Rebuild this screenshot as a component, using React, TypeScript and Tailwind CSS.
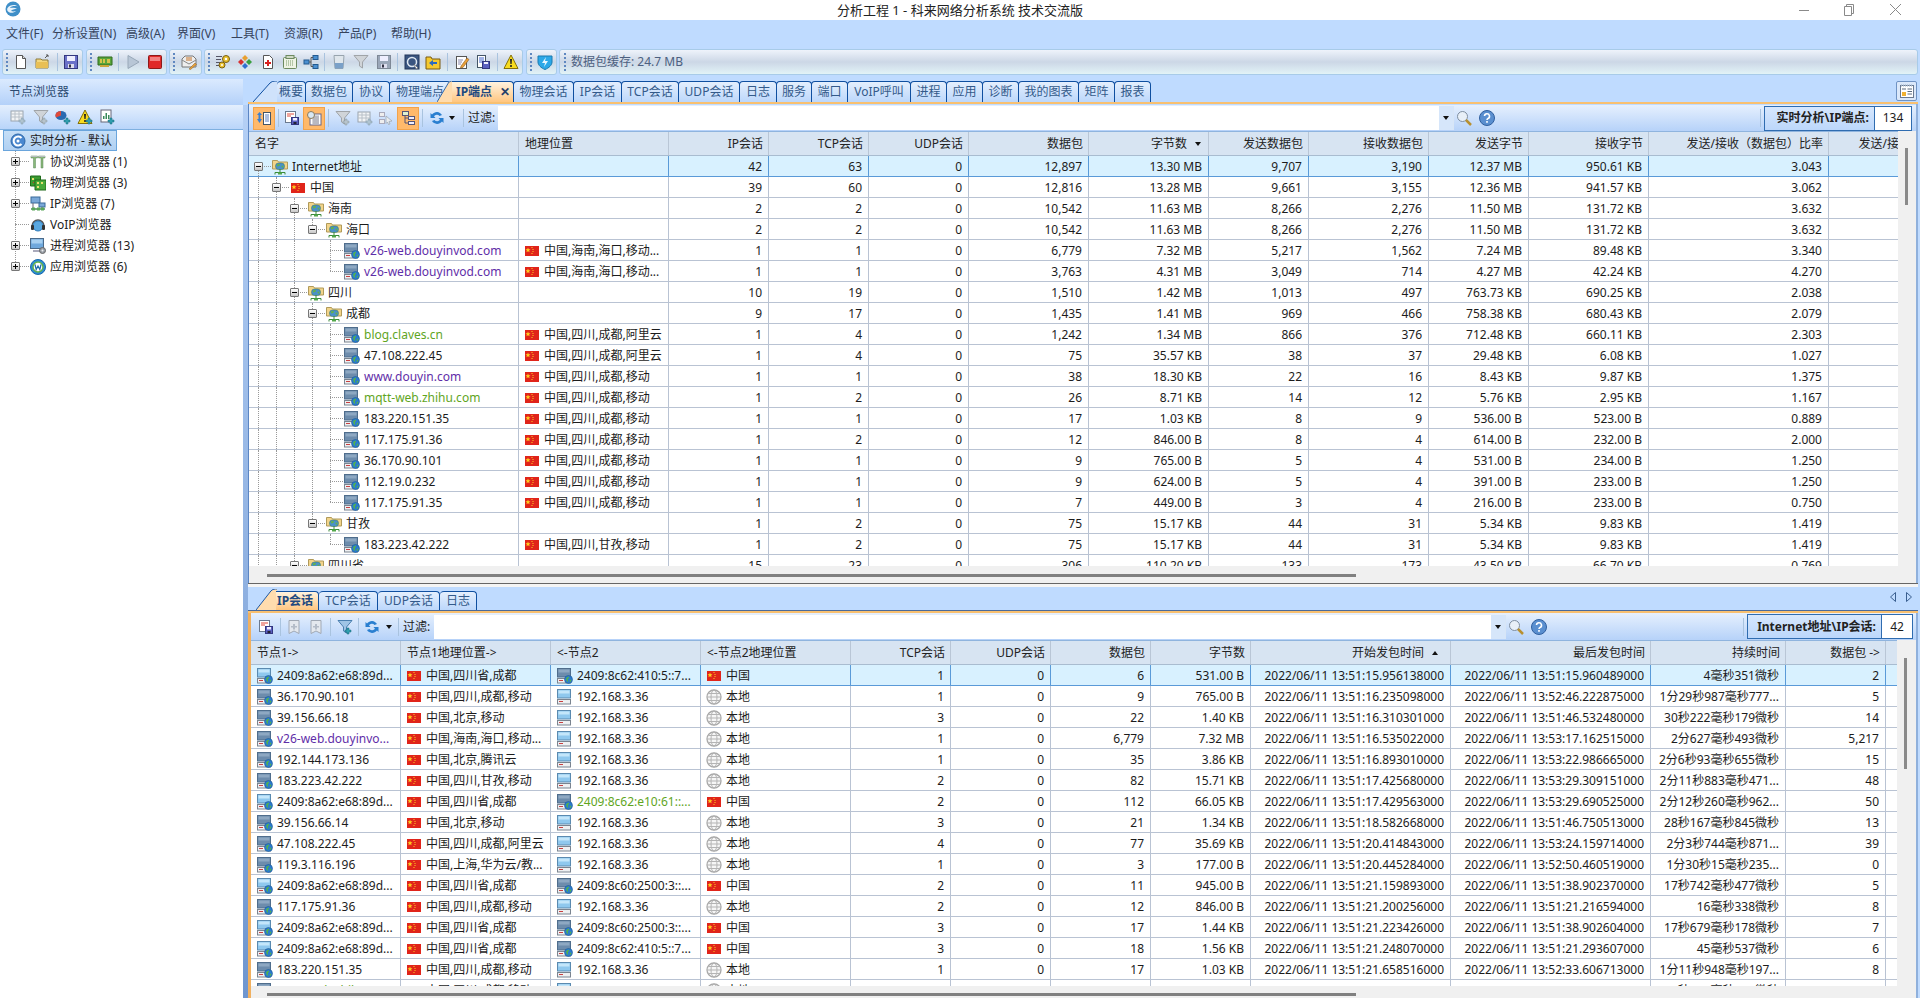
import type { ReactNode } from 'react';

const C = 'w-4 h-4 shrink-0';

function Doc() {
  return <svg viewBox="0 0 16 16" className={C}><path d="M3.500 1.500h6l3 3v10h-9z" fill="#fff" stroke="#555" /><path d="M9.500 1.500v3h3" fill="#ddd" stroke="#555" /></svg>;
}
function OpenFolder() {
  return <svg viewBox="0 0 16 16" className={C}><path d="M1 5h5l1 1h6v8H1z" fill="#f4d77c" stroke="#8c7a3c" /><path d="M1 8h12v6H1z" fill="#e8bf55" /><path d="M10 4l3-3M11 1h2v2" fill="none" stroke="#555" /></svg>;
}
function Save({ gray = false }: { gray?: boolean }) {
  const a = gray ? '#9aa6b8' : '#6a70c8';
  return <svg viewBox="0 0 16 16" className={C}><rect x="1.500" y="1.500" width="13" height="13" fill={a} stroke={gray ? '#7e8896' : '#33367f'} /><rect x="4" y="2" width="8" height="5" fill="#eef" /><rect x="5" y="10" width="6" height="4" fill="#dde" /><rect x="6" y="10.500" width="2" height="3" fill="#334" /></svg>;
}
function SaveDoc() {
  return <svg viewBox="0 0 16 16" className={C}><rect x="1.500" y="1.500" width="10" height="11" fill="#fff" stroke="#6b7a90" /><path d="M3 4h7M3 6h4" stroke="#e04a3a" /><rect x="7.500" y="7.500" width="7" height="7" fill="#5a5fc0" stroke="#33367f" /><rect x="9" y="8" width="4" height="2.500" fill="#eef" /><rect x="9.500" y="12" width="3" height="2" fill="#223" /></svg>;
}
function Nic() {
  return <svg viewBox="0 0 16 16" className={C}><path d="M1 3h14v8H1z" fill="#5aa53a" stroke="#2f6a1e" /><path d="M3 5h2v4H3zM6 5h2v4H6zM10 5h3v4h-3z" fill="#d5c34a" /><path d="M3 11h9v2H3z" fill="#c9a63a" /></svg>;
}
function Play() {
  return <svg viewBox="0 0 16 16" className={C}><path d="M3 1.500l11 6.500-11 6.500z" fill="#b8c6d6" stroke="#98a8b8" /></svg>;
}
function Stop() {
  return <svg viewBox="0 0 16 16" className={C}><rect x="1.500" y="1.500" width="13" height="13" rx="1" fill="#e02828" stroke="#8c1a1a" /><rect x="3" y="3" width="10" height="4" fill="#f28080" /></svg>;
}
function Mail() {
  return <svg viewBox="0 0 16 16" className={C}><path d="M1 5l3-3h8l3 3v8H1z" fill="#eee" stroke="#777" /><rect x="5" y="3" width="6" height="4" fill="#d9b08c" /><path d="M1 6l7 4 7-4" fill="none" stroke="#888" /><path d="M8 15l6-6 1.500 1.500-6 5z" fill="#e8a33a" stroke="#8a5a20" strokeWidth=".5" /></svg>;
}
function Gears() {
  return <svg viewBox="0 0 16 16" className={C}><path d="M1 2h6v1H1zM1 5h5v1H1zM1 8h4v1H1zM1 11h5v1H1z" fill="#556" /><circle cx="11" cy="5" r="3.500" fill="#e8c030" stroke="#7a6010" /><circle cx="7" cy="11" r="3" fill="#e8c030" stroke="#7a6010" /><circle cx="11" cy="5" r="1.200" fill="#fff" /><circle cx="7" cy="11" r="1" fill="#fff" /></svg>;
}
function Diamonds() {
  return <svg viewBox="0 0 16 16" className={C}><path d="M8 1l3 3-3 3-3-3z" fill="#e8a030" /><path d="M4 5l3 3-3 3-3-3z" fill="#d83030" /><path d="M12 5l3 3-3 3-3-3z" fill="#3aa040" /><path d="M8 9l3 3-3 3-3-3z" fill="#3070d0" /></svg>;
}
function DocPlus() {
  return <svg viewBox="0 0 16 16" className={C}><path d="M3.500 1.500h6l3 3v10h-9z" fill="#fff" stroke="#555" /><path d="M7 6h2v2h2v2H9v2H7v-2H5V8h2z" fill="#d82020" /></svg>;
}
function Clipboard() {
  return <svg viewBox="0 0 16 16" className={C}><rect x="1.500" y="3.500" width="13" height="11" rx="1" fill="#eef3e4" stroke="#6d8a60" /><rect x="4" y="1.500" width="8" height="3" fill="#cfd9c4" stroke="#6d8a60" /><path d="M4 7h8M4 9h8M4 11h8" stroke="#7a9a6a" strokeDasharray="1 1" /></svg>;
}
function Net() {
  return <svg viewBox="0 0 16 16" className={C}><rect x="1" y="6" width="5" height="4" fill="#4a8fd0" stroke="#235a90" /><rect x="10" y="1.500" width="5" height="4" fill="#4a8fd0" stroke="#235a90" /><rect x="10" y="10.500" width="5" height="4" fill="#4a8fd0" stroke="#235a90" /><path d="M6 8h2V3.500h2M8 8v4.500h2" fill="none" stroke="#555" /></svg>;
}
function Cup() {
  return <svg viewBox="0 0 16 16" className={C}><path d="M3 1.500h10l-1 13H4z" fill="#dfe6ec" stroke="#98a4ae" /><path d="M3.600 9h8.800l-.4 5.500H4z" fill="#7aa0c8" /></svg>;
}
function Funnel({ plus = false, blue = false }: { plus?: boolean; blue?: boolean }) {
  return <svg viewBox="0 0 16 16" className={C}><path d="M1 1.500h14L9.500 8v6l-3-2V8z" fill={blue ? '#9fc4e6' : '#d0d4d8'} stroke={blue ? '#4a7fb0' : '#a0a4a8'} />{plus && <path d="M10 9h2v2h2v2h-2v2h-2v-2H8v-2h2z" fill={blue ? '#2f9fb0' : '#b8c4cc'} stroke={blue ? '#1a6a7a' : '#8898a0'} strokeWidth=".5" />}</svg>;
}
function Camera() {
  return <svg viewBox="0 0 16 16" className={C}><rect x="1" y="1" width="14" height="14" fill="#3a5580" stroke="#23375a" /><circle cx="8" cy="8" r="4.500" fill="none" stroke="#dfe8f2" strokeWidth="1.500" /><path d="M10 10l4 4-2 1z" fill="#fff" stroke="#555" strokeWidth=".5" /></svg>;
}
function BackFolder() {
  return <svg viewBox="0 0 16 16" className={C}><path d="M1 3h5l1 2h8v10H1z" fill="#f5c92e" stroke="#7a5a10" /><path d="M4 9l4-3v2h4v2H8v2z" fill="#2a6ac0" /></svg>;
}
function Note() {
  return <svg viewBox="0 0 16 16" className={C}><rect x="2.500" y="2.500" width="10" height="12" fill="#fff" stroke="#555" /><path d="M4 6h5M4 8h4M4 10h3" stroke="#88a" /><path d="M7 12l6-8 2 1.500-6 8-2.500.5z" fill="#e8a03a" stroke="#7a4a18" strokeWidth=".5" /></svg>;
}
function DocSave() {
  return <svg viewBox="0 0 16 16" className={C}><rect x="2.500" y="1.500" width="8" height="12" fill="#fff" stroke="#456" /><path d="M4 4h5M4 6h5M4 8h3" stroke="#46c" /><rect x="7.500" y="7.500" width="7" height="7" fill="#5a5fc0" stroke="#33367f" /><rect x="9" y="8" width="4" height="2" fill="#eef" /></svg>;
}
function Warn({ plus = false }: { plus?: boolean }) {
  return <svg viewBox="0 0 16 16" className={C}><path d="M8 1l7 13.500H1z" fill="#f8dc20" stroke="#84700a" /><path d="M7 5h2l-.4 5H7.400zM7.200 11h1.600v2H7.200z" fill="#222" />{plus && <path d="M11 9h2v2h2v2h-2v2h-2v-2H9v-2h2z" fill="#2f9fb0" stroke="#1a6a7a" strokeWidth=".5" />}</svg>;
}
function Shield() {
  return <svg viewBox="0 0 16 16" className={C}><path d="M1 2h14v6c0 3-3 6-7 7.500C4 14 1 11 1 8z" fill="#2ca8e8" stroke="#1a7ab0" /><path d="M9 3L5 9h3l-1 4 4-6H8z" fill="#e8f6ff" /></svg>;
}
function TablePlus() {
  return <svg viewBox="0 0 16 16" className={C}><rect x="1" y="2" width="12" height="10" fill="#f2f4f6" stroke="#9aa4ae" /><path d="M1 5h12M1 8h12M5 2v10M9 2v10" stroke="#b8c0c8" /><path d="M11 9h2v2h2v2h-2v2h-2v-2H9v-2h2z" fill="#b0c4d0" stroke="#8098a8" strokeWidth=".5" /></svg>;
}
function Pie() {
  return <svg viewBox="0 0 16 16" className={C}><ellipse cx="6" cy="6.500" rx="5.500" ry="4.500" fill="#2a6ab0" /><path d="M6 6.500V2A5.500 4.500 0 0 0 1 8.500z" fill="#e04a3a" /><path d="M11 9h2v2h2v2h-2v2h-2v-2H9v-2h2z" fill="#2f9fb0" stroke="#1a6a7a" strokeWidth=".5" /></svg>;
}
function ChartDoc() {
  return <svg viewBox="0 0 16 16" className={C}><rect x="2" y="1" width="10" height="12" fill="#fff" stroke="#667" /><path d="M4 10V7h1.500v3zM6.500 10V4H8v6zM9 10V6h1.500v4z" fill="#3a8a5a" /><path d="M11 9h2v2h2v2h-2v2h-2v-2H9v-2h2z" fill="#2f9fb0" stroke="#1a6a7a" strokeWidth=".5" /></svg>;
}
function TreeGray() {
  return <svg viewBox="0 0 16 16" className={C}><rect x="1.500" y="2.500" width="5" height="4" fill="#eee" stroke="#aab" /><rect x="1.500" y="9.500" width="5" height="4" fill="#eee" stroke="#aab" /><path d="M8 6l6 5-3 .5 1 2.500-1.500.5-1-2.500L8 13.500z" fill="#e8ecf0" stroke="#9aa4ae" strokeWidth=".7" /></svg>;
}
function TreeView() {
  return <svg viewBox="0 0 16 16" className={C}><rect x="2.500" y="1.500" width="6" height="4" fill="#dff0d0" stroke="#557" /><rect x="8.500" y="6.500" width="6" height="3" fill="#eef" stroke="#557" /><rect x="8.500" y="11.500" width="6" height="3" fill="#eef" stroke="#557" /><path d="M5 5.500V13h3.500M5 8h3.500" fill="none" stroke="#557" /></svg>;
}
function Refresh() {
  return <svg viewBox="0 0 16 16" className={C}><path d="M13 5A6 6 0 0 0 3 4.500L1.500 3v5h5L5 6.300A3.500 3.500 0 0 1 10.500 6z" fill="#2a7fd0" /><path d="M3 11a6 6 0 0 0 10 .5l1.500 1.500V8h-5l1.500 1.700A3.500 3.500 0 0 1 5.500 10z" fill="#2a7fd0" /></svg>;
}
function Bookmark() {
  return <svg viewBox="0 0 16 16" className={C}><path d="M3 1.500h10v13L8 12l-5 2.500z" fill="#e4e8ee" stroke="#a0a8b4" /><path d="M7 5h2v2h2v1.500H9v2H7v-2H5V7h2z" fill="#b4bcc8" /></svg>;
}
function ExportData() {
  return <svg viewBox="0 0 16 16" className={C}><path d="M1 5l2.500-3L6 5H4.500v4L6 9l-2.500 4L1 9h1.500V5z" fill="#3a7fd0" /><rect x="7.500" y="2.500" width="7" height="12" fill="#fff" stroke="#456" /><path d="M9 5h4M9 7h4M9 9h4M9 11h4" stroke="#5a7fc0" /></svg>;
}
function PanelNote() {
  return <svg viewBox="0 0 16 16" className={C}><rect x="1.500" y="2.500" width="13" height="12" fill="#fff" stroke="#6b7a90" /><path d="M2 2.500h12" stroke="#9fb2c8" strokeWidth="2" strokeDasharray="1 1" /><rect x="3" y="9" width="4" height="4" fill="#f0b030" /><path d="M8.500 6h4.500M8.500 8.500h4.500M8.500 11h4.500" stroke="#5c6c80" /><path d="M3 6h4" stroke="#5c6c80" /></svg>;
}
function Finder() {
  return <svg viewBox="0 0 16 16" className={C}><rect x="4" y="4" width="11" height="11" fill="#fff" stroke="#668" /><path d="M6 7h7M6 9h7M6 11h7M6 13h7M8 5v9M10 5v9M12 5v9" stroke="#778" strokeWidth=".6" /><circle cx="5" cy="5" r="3.500" fill="#d8e8f4" stroke="#8a7a5a" /></svg>;
}
function Search() {
  return <svg viewBox="0 0 16 16" className={C}><circle cx="6.500" cy="6.500" r="5" fill="#e8f0f8" stroke="#7e8ea0" /><path d="M10 10l5 5" stroke="#b89030" strokeWidth="2.500" /></svg>;
}
function Help() {
  return <svg viewBox="0 0 16 16" className={C}><circle cx="8" cy="8" r="7.500" fill="#5a8fd0" stroke="#2f5f9f" /><path d="M5.500 6a2.500 2.500 0 1 1 3.500 2.500c-.7.3-1 .8-1 1.500" fill="none" stroke="#fff" strokeWidth="1.600" /><rect x="7.200" y="11" width="1.600" height="1.800" fill="#fff" /></svg>;
}
function Flag() {
  return (
    <svg viewBox="0 0 14 10" className="w-[14px] h-[10px] shrink-0">
      <rect width="14" height="10" fill="#e0241a" />
      <path d="M3 1.500l.7 1.700 1.800.1-1.400 1.100.5 1.800L3 5.200 1.400 6.200l.5-1.800L.5 3.300l1.800-.1z" fill="#ffd020" />
      <path d="M6.500 1h1v1h-1zM7.500 3h1v1h-1zM7.500 5h1v1h-1zM6.500 7h1v1h-1z" fill="#ffd020" />
    </svg>
  );
}
function Globe() {
  return (
    <svg viewBox="0 0 16 16" className={C}>
      <circle cx="8" cy="8" r="7" fill="#f6f6f6" stroke="#a8a8a8" strokeWidth="1.300" />
      <ellipse cx="8" cy="8" rx="3" ry="7" fill="none" stroke="#b4b4b4" />
      <path d="M1 8h14M2 4.500h12M2 11.500h12" stroke="#b4b4b4" />
    </svg>
  );
}
function Host({ light = false, globe = true }: { light?: boolean; globe?: boolean }) {
  return (
    <svg viewBox="0 0 16 16" className={C}>
      <rect x=".5" y=".5" width="13" height="8.500" fill={light ? '#8fc8ee' : '#6d8cac'} stroke={light ? '#5a8ab0' : '#4f6d8c'} />
      <rect x="1.500" y="1.500" width="11" height="3" fill={light ? '#c4e6fa' : '#8ea8c2'} />
      <rect x=".5" y="10.500" width="13" height="4.500" fill="#eef0f2" stroke="#7a8490" />
      <rect x="2" y="12" width="4" height="1" fill="#c84040" />
      {globe && <circle cx="11.500" cy="11.500" r="4" fill="#2a7ad0" stroke="#1f5a90" strokeWidth=".6" />}
      {globe && <path d="M9 10.500c1-1.500 2.500-2 3-1.500s-.5 1.500-1 2 .5 1.500 0 2.500-1.500-.5-2-3zM13 11.500l1.500.5-1 2-1-.5z" fill="#52b050" />}
    </svg>
  );
}
function FolderNet() {
  return (
    <svg viewBox="0 0 16 16" className={C}>
      <path d="M.5 1.500h5l1 1.500h9v7H.5z" fill="#f2d48a" stroke="#b09a5a" />
      <rect x="3.500" y="4" width="9" height="6.500" rx="3" fill="#4a90c8" stroke="#3a7a5a" strokeWidth=".5" />
      <path d="M5 5.500c1.500-1 3-.5 3 .5s-2 1-3 1.500zM9 7l2.500-.5-.5 2.500z" fill="#62b24a" />
      <path d="M8 10v3M3 15.500v-2h10v2" fill="none" stroke="#3a8a3a" />
      <rect x="6" y="13.500" width="4" height="2" fill="#52a84a" />
    </svg>
  );
}
function ProtoIcon() {
  return <svg viewBox="0 0 16 16" className={C}><path d="M1 2h6.500v2H5.500v10h-2V4H1zM8.500 2H15v2h-2v10h-2V4H8.500z" fill="#8ab87a" stroke="#5a8a5a" strokeWidth=".5" /><path d="M1 2h6.500v1H1zM8.500 2H15v1H8.500z" fill="#b8bcc0" /></svg>;
}
function PhysIcon() {
  return <svg viewBox="0 0 16 16" className={C}><path d="M.5 1h10v10H.5z" fill="#3a9a30" stroke="#1f6a1a" /><path d="M5 5h11v10H5z" fill="#4aaa3a" stroke="#1f6a1a" /><path d="M2 3h2v2H2zM7 7h2v2H7zM11 7h2v2h-2zM7 11h2v2H7z" fill="#e8e070" /><path d="M3 7h1v1H3z" fill="#d83030" /></svg>;
}
function IpIcon() {
  return <svg viewBox="0 0 16 16" className={C}><rect x="1" y="1" width="9" height="6" fill="#7aa8d8" stroke="#3a6a9a" /><rect x="9" y="7" width="6" height="4" fill="#7aa8d8" stroke="#3a6a9a" /><path d="M1 13h14" stroke="#4a8a5a" strokeWidth="1.500" /><path d="M3 7v6M12 11v2" stroke="#667" /><rect x="2" y="11.500" width="3" height="3" fill="#5aa85a" /><rect x="7" y="11.500" width="3" height="3" fill="#5aa85a" /><rect x="11" y="11.500" width="3" height="3" fill="#5aa85a" /></svg>;
}
function VoipIcon() {
  return <svg viewBox="0 0 16 16" className={C}><path d="M2 9a6 6 0 0 1 12 0" fill="none" stroke="#555" strokeWidth="1.500" /><circle cx="8" cy="9" r="5" fill="#5aa8e0" stroke="#2a78b8" /><rect x="1" y="8" width="3" height="5" rx="1" fill="#333" /><rect x="12" y="8" width="3" height="5" rx="1" fill="#333" /></svg>;
}
function ProcIcon() {
  return <svg viewBox="0 0 16 16" className={C}><rect x=".5" y=".5" width="13" height="10" fill="#6fa8dc" stroke="#4a6a8a" /><rect x="1.500" y="1.500" width="11" height="4" fill="#a8d0f0" /><rect x="3" y="12" width="7" height="2" fill="#aab" /><circle cx="12.500" cy="12.500" r="3" fill="#9aa0a8" stroke="#666" /><circle cx="12.500" cy="12.500" r="1" fill="#eee" /></svg>;
}
function AppIcon() {
  return <svg viewBox="0 0 16 16" className={C}><circle cx="8" cy="8" r="7.500" fill="#2a8ad8" stroke="#1a6aa8" /><circle cx="8" cy="8" r="5" fill="#fff" stroke="#62b24a" strokeWidth="1.500" /><path d="M5 5.500l1.200 5L8 7l1.800 3.500 1.200-5" fill="none" stroke="#1a6aa8" strokeWidth="1.200" /></svg>;
}
function Clock() {
  return <svg viewBox="0 0 16 16" className={C}><circle cx="8" cy="8" r="7" fill="#4a88d0" stroke="#2f68a8" /><path d="M11.500 5a4.500 4.500 0 1 0 0 6" fill="none" stroke="#fff" strokeWidth="2" /><circle cx="8" cy="8" r="1.500" fill="#fff" /></svg>;
}
function Logo() {
  return (
    <svg viewBox="0 0 16 16" className="w-4 h-4 shrink-0">
      <circle cx="8" cy="8" r="7.500" fill="#3f8fc8" />
      <path d="M2.500 7c2-3.500 8-4 10.500-1.500-3-1-7-.5-8 1.500 2-.5 5.500-.5 7 1-2.500 0-5 .5-6 2 1.500.5 3.500.5 5 0-2 2-6 2.500-8 .5C2 9.700 2 8 2.500 7z" fill="#e8f2fa" />
    </svg>
  );
}
function Grip({ className }: { className: string }) {
  return (
    <div className={`flex flex-col gap-[2px] w-[2px] shrink-0 ${className}`}>
      <span className="w-[2px] h-[2px] bg-[#5f87c0]" />
      <span className="w-[2px] h-[2px] bg-[#5f87c0]" />
      <span className="w-[2px] h-[2px] bg-[#5f87c0]" />
      <span className="w-[2px] h-[2px] bg-[#5f87c0]" />
      <span className="w-[2px] h-[2px] bg-[#5f87c0]" />
    </div>
  );
}
function Sep({ className }: { className: string }) {
  return <span className={`w-[1px] h-[18px] shrink-0 bg-[#a9c3df] ${className}`} />;
}
function Ml({ className, children }: { className: string; children: ReactNode }) {
  return <span className={`flex shrink-0 ${className}`}>{children}</span>;
}
function DownArrow({ className = '' }: { className?: string }) {
  return <span className={`w-0 h-0 shrink-0 border-x-[3px] border-x-transparent border-t-[4px] border-t-[#111] ${className}`} />;
}
function Active({ className, children }: { className: string; children: ReactNode }) {
  return <span className={`w-[22px] h-[23px] shrink-0 flex items-center justify-center bg-[#ffb96b] border border-[#f2a34b] ${className}`}>{children}</span>;
}
function Group({ className, children }: { className: string; children: ReactNode }) {
  return (
    <div className={`h-[26px] shrink-0 flex items-center rounded-[3px] border border-[#a8cbe8] bg-linear-to-b from-[#eef3fb] via-[#ccd7e6] to-[#e2f3f7] ${className}`}>
      {children}
    </div>
  );
}

type TabDef = { t: string; w: string };

function Tab({ t, w }: TabDef) {
  return (
    <div className={`h-[21px] flex items-center justify-center rounded-t-[4px] border-t border-x border-[#0f4fa0] shrink-0 bg-linear-to-b from-[#e4effd] to-[#bcd7fb] text-[#335a8a] -ml-[1px] ${w}`}>
      {t}
    </div>
  );
}
function Slant({ fill, className = '' }: { fill: string; className?: string }) {
  return (
    <svg viewBox="0 0 24 21" preserveAspectRatio="none" className={`h-[21px] shrink-0 ${className}`}>
      <path d="M0 21L17 2Q19 0 22 0H24V21Z" fill={fill} />
      <path d="M0 21L17 2Q19 0 22 0H24" fill="none" stroke="#0f4fa0" />
    </svg>
  );
}

const upperGrid = 'grid grid-cols-[270px_150px_100px_100px_100px_120px_120px_100px_120px_100px_120px_180px_160px] w-[1720px]';
const lowerGrid = 'grid grid-cols-[150px_150px_150px_150px_100px_100px_100px_100px_200px_200px_135px_100px_11px] w-[1646px]';
const cellR = 'flex items-center justify-end pr-[6px] pt-[2px] overflow-hidden whitespace-nowrap border-r';
const cellL = 'flex items-center pt-[2px] overflow-hidden whitespace-nowrap border-r';
const headBase = 'flex items-center overflow-hidden whitespace-nowrap border-r border-[#b9c6d6] text-[#222]';

function HeadCells({ cols }: { cols: { t: string; left?: boolean; sort?: 'up' | 'down' }[] }) {
  return (
    <>
      {cols.map((c, i) => (
        <div key={i} className={`${headBase} ${c.left ? 'pl-[6px]' : 'justify-end pr-[5px]'}`}>
          {c.t}
          {c.sort === 'down' && <DownArrow className="ml-[8px] mr-[2px]" />}
          {c.sort === 'up' && <span className="w-0 h-0 ml-[8px] mr-[7px] border-x-[3px] border-x-transparent border-b-[4px] border-b-[#111]" />}
        </div>
      ))}
    </>
  );
}

type Upper = { n: string; l: number; exp?: boolean; kind: 'root' | 'flag' | 'folder' | 'host'; color?: string; geo?: string; v: string[] };

const PURPLE = 'text-[#5f2ea8]';
const GREEN = 'text-[#5fa51e]';

const upperRows: Upper[] = [
  { n: 'Internet地址', l: 0, exp: true, kind: 'root', v: ['42', '63', '0', '12,897', '13.30 MB', '9,707', '3,190', '12.37 MB', '950.61 KB', '3.043'] },
  { n: '中国', l: 1, exp: true, kind: 'flag', v: ['39', '60', '0', '12,816', '13.28 MB', '9,661', '3,155', '12.36 MB', '941.57 KB', '3.062'] },
  { n: '海南', l: 2, exp: true, kind: 'folder', v: ['2', '2', '0', '10,542', '11.63 MB', '8,266', '2,276', '11.50 MB', '131.72 KB', '3.632'] },
  { n: '海口', l: 3, exp: true, kind: 'folder', v: ['2', '2', '0', '10,542', '11.63 MB', '8,266', '2,276', '11.50 MB', '131.72 KB', '3.632'] },
  { n: 'v26-web.douyinvod.com', l: 4, kind: 'host', color: PURPLE, geo: '中国,海南,海口,移动...', v: ['1', '1', '0', '6,779', '7.32 MB', '5,217', '1,562', '7.24 MB', '89.48 KB', '3.340'] },
  { n: 'v26-web.douyinvod.com', l: 4, kind: 'host', color: PURPLE, geo: '中国,海南,海口,移动...', v: ['1', '1', '0', '3,763', '4.31 MB', '3,049', '714', '4.27 MB', '42.24 KB', '4.270'] },
  { n: '四川', l: 2, exp: true, kind: 'folder', v: ['10', '19', '0', '1,510', '1.42 MB', '1,013', '497', '763.73 KB', '690.25 KB', '2.038'] },
  { n: '成都', l: 3, exp: true, kind: 'folder', v: ['9', '17', '0', '1,435', '1.41 MB', '969', '466', '758.38 KB', '680.43 KB', '2.079'] },
  { n: 'blog.claves.cn', l: 4, kind: 'host', color: GREEN, geo: '中国,四川,成都,阿里云', v: ['1', '4', '0', '1,242', '1.34 MB', '866', '376', '712.48 KB', '660.11 KB', '2.303'] },
  { n: '47.108.222.45', l: 4, kind: 'host', geo: '中国,四川,成都,阿里云', v: ['1', '4', '0', '75', '35.57 KB', '38', '37', '29.48 KB', '6.08 KB', '1.027'] },
  { n: 'www.douyin.com', l: 4, kind: 'host', color: PURPLE, geo: '中国,四川,成都,移动', v: ['1', '1', '0', '38', '18.30 KB', '22', '16', '8.43 KB', '9.87 KB', '1.375'] },
  { n: 'mqtt-web.zhihu.com', l: 4, kind: 'host', color: GREEN, geo: '中国,四川,成都,移动', v: ['1', '2', '0', '26', '8.71 KB', '14', '12', '5.76 KB', '2.95 KB', '1.167'] },
  { n: '183.220.151.35', l: 4, kind: 'host', geo: '中国,四川,成都,移动', v: ['1', '1', '0', '17', '1.03 KB', '8', '9', '536.00 B', '523.00 B', '0.889'] },
  { n: '117.175.91.36', l: 4, kind: 'host', geo: '中国,四川,成都,移动', v: ['1', '2', '0', '12', '846.00 B', '8', '4', '614.00 B', '232.00 B', '2.000'] },
  { n: '36.170.90.101', l: 4, kind: 'host', geo: '中国,四川,成都,移动', v: ['1', '1', '0', '9', '765.00 B', '5', '4', '531.00 B', '234.00 B', '1.250'] },
  { n: '112.19.0.232', l: 4, kind: 'host', geo: '中国,四川,成都,移动', v: ['1', '1', '0', '9', '624.00 B', '5', '4', '391.00 B', '233.00 B', '1.250'] },
  { n: '117.175.91.35', l: 4, kind: 'host', geo: '中国,四川,成都,移动', v: ['1', '1', '0', '7', '449.00 B', '3', '4', '216.00 B', '233.00 B', '0.750'] },
  { n: '甘孜', l: 3, exp: true, kind: 'folder', v: ['1', '2', '0', '75', '15.17 KB', '44', '31', '5.34 KB', '9.83 KB', '1.419'] },
  { n: '183.223.42.222', l: 4, kind: 'host', geo: '中国,四川,甘孜,移动', v: ['1', '2', '0', '75', '15.17 KB', '44', '31', '5.34 KB', '9.83 KB', '1.419'] },
  { n: '四川省', l: 2, exp: true, kind: 'folder', v: ['15', '23', '0', '306', '110.20 KB', '133', '173', '43.50 KB', '66.70 KB', '0.769'] },
];

function continues(i: number, l: number) {
  if (l <= 1) return true;
  for (let j = i + 1; j < upperRows.length; j++) {
    if (upperRows[j].l < l) return false;
    if (upperRows[j].l === l) return true;
  }
  return false;
}

function Expander({ minus }: { minus: boolean }) {
  return (
    <span className="w-[9px] h-[9px] flex items-center justify-center border border-[#777] bg-linear-to-b from-[#fff] to-[#c8c8c8] rounded-[1px]">
      <span className="relative w-[5px] h-[1px] bg-black">
        {!minus && <span className="absolute left-[2px] -top-[2px] w-[1px] h-[5px] bg-black" />}
      </span>
    </span>
  );
}

function UpperTree({ r, i, line }: { r: Upper; i: number; line: string }) {
  const ex = 9 + 18 * r.l;
  const levels = Array.from({ length: r.l }, (_, k) => k).filter((k) => continues(i, k));
  return (
    <div className={`relative h-full flex items-center pt-[2px] whitespace-nowrap overflow-hidden border-r ${line}`} style={{ paddingLeft: 23 + 18 * r.l }}>
      {levels.map((k) => (
        <span key={k} className="absolute top-0 bottom-0 border-l border-dotted border-[#999]" style={{ left: 9 + 18 * k }} />
      ))}
      {i > 0 && <span className="absolute top-0 h-[10px] border-l border-dotted border-[#999]" style={{ left: ex }} />}
      {continues(i, r.l) && <span className="absolute top-[10px] bottom-0 border-l border-dotted border-[#999]" style={{ left: ex }} />}
      <span className="absolute top-[10px] w-[13px] border-t border-dotted border-[#999]" style={{ left: ex }} />
      {r.exp && (
        <span className="absolute top-[6px]" style={{ left: ex - 4 }}>
          <Expander minus />
        </span>
      )}
      {r.kind === 'flag' ? <span className="w-4 flex justify-center"><Flag /></span> : r.kind === 'host' ? <Host /> : <FolderNet />}
      <span className={`ml-[4px] ${r.color ?? ''}`}>{r.n}</span>
    </div>
  );
}

type Lower = { a: string; ac?: string; al?: boolean; g: string; b: string; bc?: string; bd?: boolean; h: string; v: string[] };
const LH = '192.168.3.36';
const SC = '中国,四川省,成都';
const A24 = '2409:8a62:e68:89d...';

const lowerRows: Lower[] = [
  { a: A24, al: true, g: SC, b: '2409:8c62:410:5::7...', bd: true, h: '中国', v: ['1', '0', '6', '531.00 B', '13:51:15.956138000', '13:51:15.960489000', '4毫秒351微秒', '2'] },
  { a: '36.170.90.101', g: '中国,四川,成都,移动', b: LH, h: '本地', v: ['1', '0', '9', '765.00 B', '13:51:16.235098000', '13:52:46.222875000', '1分29秒987毫秒777...', '5'] },
  { a: '39.156.66.18', g: '中国,北京,移动', b: LH, h: '本地', v: ['3', '0', '22', '1.40 KB', '13:51:16.310301000', '13:51:46.532480000', '30秒222毫秒179微秒', '14'] },
  { a: 'v26-web.douyinvo...', ac: PURPLE, g: '中国,海南,海口,移动...', b: LH, h: '本地', v: ['1', '0', '6,779', '7.32 MB', '13:51:16.535022000', '13:53:17.162515000', '2分627毫秒493微秒', '5,217'] },
  { a: '192.144.173.136', g: '中国,北京,腾讯云', b: LH, h: '本地', v: ['1', '0', '35', '3.86 KB', '13:51:16.893010000', '13:53:22.986665000', '2分6秒93毫秒655微秒', '15'] },
  { a: '183.223.42.222', g: '中国,四川,甘孜,移动', b: LH, h: '本地', v: ['2', '0', '82', '15.71 KB', '13:51:17.425680000', '13:53:29.309151000', '2分11秒883毫秒471...', '48'] },
  { a: A24, al: true, g: SC, b: '2409:8c62:e10:61::...', bc: GREEN, bd: true, h: '中国', v: ['2', '0', '112', '66.05 KB', '13:51:17.429563000', '13:53:29.690525000', '2分12秒260毫秒962...', '50'] },
  { a: '39.156.66.14', g: '中国,北京,移动', b: LH, h: '本地', v: ['3', '0', '21', '1.34 KB', '13:51:18.582668000', '13:51:46.750513000', '28秒167毫秒845微秒', '13'] },
  { a: '47.108.222.45', g: '中国,四川,成都,阿里云', b: LH, h: '本地', v: ['4', '0', '77', '35.69 KB', '13:51:20.414843000', '13:53:24.159714000', '2分3秒744毫秒871...', '39'] },
  { a: '119.3.116.196', g: '中国,上海,华为云/教...', b: LH, h: '本地', v: ['1', '0', '3', '177.00 B', '13:51:20.445284000', '13:52:50.460519000', '1分30秒15毫秒235...', '0'] },
  { a: A24, al: true, g: SC, b: '2409:8c60:2500:3::...', bd: true, h: '中国', v: ['2', '0', '11', '945.00 B', '13:51:21.159893000', '13:51:38.902370000', '17秒742毫秒477微秒', '5'] },
  { a: '117.175.91.36', g: '中国,四川,成都,移动', b: LH, h: '本地', v: ['2', '0', '12', '846.00 B', '13:51:21.200256000', '13:51:21.216594000', '16毫秒338微秒', '8'] },
  { a: A24, al: true, g: SC, b: '2409:8c60:2500:3::...', bd: true, h: '中国', v: ['3', '0', '17', '1.44 KB', '13:51:21.223426000', '13:51:38.902604000', '17秒679毫秒178微秒', '7'] },
  { a: A24, al: true, g: SC, b: '2409:8c62:410:5::7...', bd: true, h: '中国', v: ['3', '0', '18', '1.56 KB', '13:51:21.248070000', '13:51:21.293607000', '45毫秒537微秒', '6'] },
  { a: '183.220.151.35', g: '中国,四川,成都,移动', b: LH, h: '本地', v: ['1', '0', '17', '1.03 KB', '13:51:21.658516000', '13:52:33.606713000', '1分11秒948毫秒197...', '8'] },
  { a: 'mqtt-web.zhihu.com', ac: GREEN, g: '中国,四川,成都,移动', b: LH, h: '本地', v: ['2', '0', '26', '8.71 KB', '13:51:21.873401000', '13:51:27.320144000', '5秒446毫秒743微秒', '14'] },
];

const upperHead = [
  { t: '名字', left: true }, { t: '地理位置', left: true }, { t: 'IP会话' }, { t: 'TCP会话' }, { t: 'UDP会话' }, { t: '数据包' },
  { t: '字节数', sort: 'down' as const }, { t: '发送数据包' }, { t: '接收数据包' }, { t: '发送字节' }, { t: '接收字节' }, { t: '发送/接收（数据包）比率' }, { t: '发送/接收（字节）比率' },
];
const lowerHead = [
  { t: '节点1->', left: true }, { t: '节点1地理位置->', left: true }, { t: '<-节点2', left: true }, { t: '<-节点2地理位置', left: true },
  { t: 'TCP会话' }, { t: 'UDP会话' }, { t: '数据包' }, { t: '字节数' }, { t: '开始发包时间', sort: 'up' as const }, { t: '最后发包时间' }, { t: '持续时间' }, { t: '数据包 ->' },
];

const mainTabs: TabDef[] = [
  { t: '概要', w: 'w-[29px] border-l-0 ml-0' }, { t: '数据包', w: 'w-[48px]' }, { t: '协议', w: 'w-[38px]' }, { t: '物理端点', w: 'w-[62px]' },
];
const restTabs: TabDef[] = [
  { t: '物理会话', w: 'w-[61px]' }, { t: 'IP会话', w: 'w-[49px]' }, { t: 'TCP会话', w: 'w-[58px]' }, { t: 'UDP会话', w: 'w-[62px]' },
  { t: '日志', w: 'w-[38px]' }, { t: '服务', w: 'w-[36px]' }, { t: '端口', w: 'w-[37px]' }, { t: 'VoIP呼叫', w: 'w-[64px]' },
  { t: '进程', w: 'w-[37px]' }, { t: '应用', w: 'w-[37px]' }, { t: '诊断', w: 'w-[37px]' }, { t: '我的图表', w: 'w-[61px]' },
  { t: '矩阵', w: 'w-[37px]' }, { t: '报表', w: 'w-[37px]' },
];

const treeItems = [
  { t: '协议浏览器 (1)', i: <ProtoIcon />, exp: true },
  { t: '物理浏览器 (3)', i: <PhysIcon />, exp: true },
  { t: 'IP浏览器 (7)', i: <IpIcon />, exp: true },
  { t: 'VoIP浏览器', i: <VoipIcon />, exp: false },
  { t: '进程浏览器 (13)', i: <ProcIcon />, exp: true },
  { t: '应用浏览器 (6)', i: <AppIcon />, exp: true },
];

function Menu() {
  const items = [
    ['文件(F)', 'w-[46px]'], ['分析设置(N)', 'w-[74px]'], ['高级(A)', 'w-[51px]'], ['界面(V)', 'w-[54px]'],
    ['工具(T)', 'w-[53px]'], ['资源(R)', 'w-[54px]'], ['产品(P)', 'w-[53px]'], ['帮助(H)', 'w-[50px]'],
  ];
  return (
    <div className="h-[27px] shrink-0 flex items-center pl-[6px] mb-[2px] text-[#36435c]">
      {items.map(([t, w]) => <span key={t} className={`${w} whitespace-nowrap`}>{t}</span>)}
    </div>
  );
}

function MainToolbar() {
  return (
    <div className="h-[26px] shrink-0 flex items-center pl-[2px]">
      <Group className="w-[81px]">
        <Grip className="ml-[3px]" /><Ml className="ml-[5px]"><Doc /></Ml><Ml className="ml-[6px]"><OpenFolder /></Ml><Sep className="ml-[6px]" /><Ml className="ml-[5px]"><Save /></Ml>
      </Group>
      <Group className="w-[81px] ml-[3px]">
        <Grip className="ml-[3px]" /><Ml className="ml-[5px]"><Nic /></Ml><Sep className="ml-[5px]" /><Ml className="ml-[6px]"><Play /></Ml><Ml className="ml-[6px]"><Stop /></Ml>
      </Group>
      <Group className="w-[33px] ml-[2px]">
        <Grip className="ml-[3px]" /><Ml className="ml-[6px]"><Mail /></Ml>
      </Group>
      <Group className="w-[319px] ml-[2px]">
        <Grip className="ml-[3px]" /><Ml className="ml-[5px]"><Gears /></Ml><Ml className="ml-[6px]"><Diamonds /></Ml><Ml className="ml-[7px]"><DocPlus /></Ml><Ml className="ml-[6px]"><Clipboard /></Ml><Ml className="ml-[5px]"><Net /></Ml>
        <Sep className="ml-[5px]" /><Ml className="ml-[6px]"><Cup /></Ml><Ml className="ml-[6px]"><Funnel /></Ml><Ml className="ml-[7px]"><Save gray /></Ml>
        <Sep className="ml-[5px]" /><Ml className="ml-[6px]"><Camera /></Ml><Ml className="ml-[5px]"><BackFolder /></Ml>
        <Sep className="ml-[6px]" /><Ml className="ml-[6px]"><Note /></Ml><Ml className="ml-[5px]"><DocSave /></Ml>
        <Sep className="ml-[6px]" /><Ml className="ml-[5px]"><Warn /></Ml>
      </Group>
      <Group className="w-[31px] ml-[3px]">
        <Grip className="ml-[3px]" /><Ml className="ml-[5px]"><Shield /></Ml>
      </Group>
      <Group className="w-[1359px] ml-[2px]">
        <Grip className="ml-[4px]" />
        <span className="ml-[5px] text-[#4c6080]">数据包缓存: 24.7 MB</span>
      </Group>
    </div>
  );
}

function LeftPanel() {
  return (
    <div className="w-[243px] shrink-0 flex flex-col h-full">
      <div className="h-[26px] shrink-0 flex items-center pl-[9px] text-[#2b4a70] bg-linear-to-b from-[#dbeafe] to-[#b4d1f9]">节点浏览器</div>
      <div className="h-[25px] shrink-0 flex items-center bg-linear-to-b from-[#e4effd] to-[#b9d5fa] border-b border-[#7fb0e0]">
        <Ml className="ml-[10px]"><TablePlus /></Ml><Ml className="ml-[7px]"><Funnel plus /></Ml><Ml className="ml-[6px]"><Pie /></Ml><Ml className="ml-[6px]"><Warn plus /></Ml><Ml className="ml-[6px]"><ChartDoc /></Ml>
      </div>
      <div className="relative flex-1 bg-white text-[#222]">
        <div className="ml-[3px] w-[114px] h-[21px] flex items-center pl-[6px] gap-[3px] bg-linear-to-b from-[#c6dff7] to-[#b0d0f2] border border-[#6aa5dc]">
          <Clock /><span className="ml-[1px] whitespace-nowrap">实时分析 - 默认</span>
        </div>
        <span className="absolute left-[15px] top-[21px] h-[115px] border-l border-dotted border-[#999]" />
        {treeItems.map((it) => (
          <div key={it.t} className="relative h-[21px] flex items-center pl-[30px]">
            <span className="absolute left-[15px] top-[10px] w-[14px] border-t border-dotted border-[#999]" />
            {it.exp && <span className="absolute left-[11px] top-[6px]"><Expander minus={false} /></span>}
            {it.i}
            <span className="ml-[4px] whitespace-nowrap">{it.t}</span>
          </div>
        ))}
      </div>
    </div>
  );
}

function InfoBox({ label, value, w, vw }: { label: string; value: string; w: string; vw: string }) {
  return (
    <div className={`h-[25px] flex items-center border border-[#2f6cb0] bg-linear-to-b from-[#d6e7fd] to-[#bcd7fb] ${w}`}>
      <span className="flex-1 text-right pr-[5px] font-bold text-[#222] whitespace-nowrap">{label}</span>
      <span className={`h-full flex items-center justify-center bg-white border-l border-[#2f6cb0] ${vw}`}>{value}</span>
    </div>
  );
}

function FilterBox({ w }: { w: string }) {
  return (
    <div className={`h-[24px] flex items-center bg-white border-r border-[#d8e6f6] shrink-0 ${w}`}>
      <span className="ml-auto w-[14px] h-full flex items-center justify-center bg-[#d6e6fa]"><DownArrow /></span>
    </div>
  );
}

function VScroll({ thumb }: { thumb: string }) {
  return (
    <div className="relative flex-1 bg-[#f0f0f0]">
      <span className={`absolute left-[7px] w-[3px] bg-[#8a8a8a] ${thumb}`} />
    </div>
  );
}

export default function App() {
  return (
    <div className="w-[1920px] h-[998px] overflow-hidden flex flex-col bg-[#bfdbff] text-[12px] leading-none text-[#1c1c1c] font-['Noto_Sans','Noto_Sans_CJK_SC',sans-serif]">
      {/* title bar */}
      <div className="relative h-[20px] shrink-0 bg-white flex items-center justify-center text-[13px] text-[#222]">
        <span className="absolute left-[5px] top-[1px]"><Logo /></span>
        分析工程 1 - 科来网络分析系统 技术交流版
        <svg viewBox="0 0 120 14" className="absolute right-[18px] top-[3px] w-[120px] h-[14px]" fill="none" stroke="#8a8a8a">
          <path d="M17 7.500h10" />
          <path d="M62.500 3.500h7v9h-7zM64.500 3.500v-2h7v9h-2" />
          <path d="M108 1l11 11M119 1l-11 11" />
        </svg>
      </div>
      <Menu />
      <MainToolbar />
      <div className="flex flex-1 min-h-0 mt-[4px]">
        <LeftPanel />
        <div className="w-[5px] shrink-0 mt-[26px] bg-linear-to-b from-[#b5d0f5] to-[#6f96cf]" />
        {/* right column */}
        <div className="flex-1 min-w-0 flex flex-col">
          {/* upper tabs */}
          <div className="relative h-[25px] shrink-0 flex items-end border-b-2 border-[#f8c070] pl-[5px] mr-[2px]">
            <Slant fill="#cfe2fb" className="w-[24px]" />
            {mainTabs.map((t) => <Tab key={t.t} {...t} />)}
            <Slant fill="#ffdcae" className="w-[16px] -ml-[14px] relative" />
            <div className="w-[62px] -ml-[1px] relative h-[21px] flex items-center rounded-tr-[4px] border-t border-r border-[#0f4fa0] bg-linear-to-b from-[#fff3df] to-[#ffc680] font-bold text-[#1f4a80] shrink-0 whitespace-nowrap pl-[4px]">
              <span>IP端点</span>
              <span className="ml-[8px] text-[12px] font-bold text-[#24406a]">✕</span>
            </div>
            {restTabs.map((t) => <Tab key={t.t} {...t} />)}
            <span className="absolute right-[1px] bottom-[1px] w-[21px] h-[20px] flex items-center justify-center bg-[#dbe8fa] border border-[#6f93c4] rounded-[2px]"><PanelNote /></span>
          </div>
          {/* upper pane */}
          <div className="shrink-0 flex flex-col mr-[2px] border-r-2 border-[#8fb0dc] border-l border-l-[#5c86c4] pt-[1px]">
            <div className="h-[26px] shrink-0 flex items-center bg-linear-to-b from-[#e6f0fd] to-[#b6d2f9]">
              <Active className="ml-[4px]"><ExportData /></Active><Sep className="ml-[3px]" /><Ml className="ml-[5px]"><SaveDoc /></Ml>
              <Active className="ml-[3px]"><Finder /></Active><Sep className="ml-[3px]" /><Ml className="ml-[6px]"><Funnel plus /></Ml><Ml className="ml-[6px]"><TablePlus /></Ml><Ml className="ml-[5px]"><TreeGray /></Ml>
              <Active className="ml-[3px]"><TreeView /></Active><Sep className="ml-[3px]" /><Ml className="ml-[6px]"><Refresh /></Ml><DownArrow className="ml-[4px]" /><Sep className="ml-[8px]" />
              <span className="ml-[4px] w-[30px] shrink-0 whitespace-nowrap">过滤:</span>
              <FilterBox w="w-[956px]" />
              <Ml className="ml-[2px]"><Search /></Ml><Ml className="ml-[7px]"><Help /></Ml>
              <Sep className="ml-auto mr-[3px]" />
              <InfoBox label="实时分析\IP端点:" value="134" w="w-[148px] mr-[4px] shrink-0" vw="w-[37px]" />
            </div>
            <div className="flex h-[25px] shrink-0">
              <div className="w-[1649px] shrink-0 overflow-hidden">
                <div className={`${upperGrid} h-[25px] bg-[#d7e4f2] border-y border-t-[#8fb4de] border-b-[#a9bcd0]`}>
                  <HeadCells cols={upperHead} />
                </div>
              </div>
              <div className="flex-1 bg-[#f0f0f0]" />
            </div>
            <div className="flex h-[410px] shrink-0">
              <div className="w-[1649px] shrink-0 overflow-hidden bg-white">
                {upperRows.map((r, i) => {
                  const sel = i === 0;
                  const line = sel ? 'border-[#5a9ad8]' : 'border-[#b9c3d3]';
                  return (
                    <div key={i} className={`${upperGrid} h-[21px] border-b ${line} ${sel ? 'bg-[#d8f1ff]' : ''}`}>
                      <UpperTree r={r} i={i} line={line} />
                      <div className={`${cellL} ${line} pl-[6px]`}>
                        {r.geo && <><Flag /><span className="ml-[5px]">{r.geo}</span></>}
                      </div>
                      {r.v.map((x, k) => <div key={k} className={`${cellR} ${line}`}>{x}</div>)}
                      <div className={`${cellR} ${line}`} />
                    </div>
                  );
                })}
              </div>
              <VScroll thumb="top-[-8px] h-[57px]" />
            </div>
            <div className="relative h-[17px] shrink-0 bg-[#f0f0f0]">
              <span className="absolute left-[18px] right-[560px] top-[8px] h-[3px] bg-[#808080]" />
            </div>
          </div>
          <div className="h-[1px] shrink-0 bg-[#666] mr-[2px]" />
          <div className="h-[3px] shrink-0 bg-[#f4f4f4] mr-[2px]" />
          {/* lower tabs */}
          <div className="relative h-[23px] shrink-0 flex items-end pl-[8px] mr-[2px]">
            <Slant fill="#ffdcae" className="w-[21px]" />
            <div className="w-[43px] -ml-[1px] h-[19px] flex items-center rounded-tr-[4px] border-t border-r border-[#0f4fa0] bg-linear-to-b from-[#fff3df] to-[#ffc680] font-bold text-[#1f4a80] shrink-0 whitespace-nowrap">
              <span className="pl-[1px]">IP会话</span>
            </div>
            <div className="h-[19px] w-[59px] flex items-center justify-center rounded-t-[4px] border-t border-r border-[#0f4fa0] bg-linear-to-b from-[#e4effd] to-[#bcd7fb] text-[#335a8a]">TCP会话</div>
            <div className="h-[19px] w-[62px] flex items-center justify-center rounded-t-[4px] border-t border-r border-[#0f4fa0] bg-linear-to-b from-[#e4effd] to-[#bcd7fb] text-[#335a8a]">UDP会话</div>
            <div className="h-[19px] w-[37px] flex items-center justify-center rounded-t-[4px] border-t border-r border-[#0f4fa0] bg-linear-to-b from-[#e4effd] to-[#bcd7fb] text-[#335a8a]">日志</div>
            <svg viewBox="0 0 24 12" className="absolute right-[5px] top-[4px] w-[24px] h-[12px]" fill="none" stroke="#3a5f90">
              <path d="M6.500 1.500L1.500 6l5 4.500zM17.500 1.500l5 4.500-5 4.500z" />
            </svg>
          </div>
          {/* lower pane */}
          <div className="h-[3px] shrink-0 bg-[#f8c070] mr-[2px] border-t border-[#4a6a9a]" />
          <div className="flex-1 min-h-0 flex flex-col mr-[2px] border-r-2 border-[#8fb0dc] border-l-[3px] border-l-[#f0b060]">
            <div className="h-[27px] shrink-0 flex items-center bg-linear-to-b from-[#e6f0fd] to-[#b6d2f9]">
              <Ml className="ml-[7px]"><SaveDoc /></Ml><Sep className="ml-[6px]" /><Ml className="ml-[5px]"><Bookmark /></Ml><Ml className="ml-[6px]"><Bookmark /></Ml><Sep className="ml-[6px]" />
              <Ml className="ml-[6px]"><Funnel plus blue /></Ml><Sep className="ml-[5px]" /><Ml className="ml-[5px]"><Refresh /></Ml><DownArrow className="ml-[6px]" /><Sep className="ml-[6px]" />
              <span className="ml-[4px] w-[31px] shrink-0 whitespace-nowrap">过滤:</span>
              <FilterBox w="w-[1072px]" />
              <Ml className="ml-[2px]"><Search /></Ml><Ml className="ml-[7px]"><Help /></Ml>
              <Sep className="ml-auto mr-[3px]" />
              <InfoBox label="Internet地址\IP会话:" value="42" w="w-[166px] mr-[3px] shrink-0" vw="w-[31px]" />
            </div>
            <div className="flex h-[25px] shrink-0">
              <div className="w-[1646px] shrink-0 overflow-hidden">
                <div className={`${lowerGrid} h-[25px] bg-[#d7e4f2] border-y border-t-[#8fb4de] border-b-[#a9bcd0]`}>
                  <HeadCells cols={lowerHead} />
                  <div className="" />
                </div>
              </div>
              <div className="flex-1 bg-[#f0f0f0]" />
            </div>
            <div className="flex h-[321px] shrink-0">
              <div className="w-[1646px] shrink-0 overflow-hidden bg-white">
                {lowerRows.map((r, i) => {
                  const sel = i === 0;
                  const line = sel ? 'border-[#5a9ad8]' : 'border-[#b9c3d3]';
                  return (
                    <div key={i} className={`${lowerGrid} h-[21px] border-b ${line} ${sel ? 'bg-[#d8f1ff]' : ''}`}>
                      <div className={`${cellL} ${line} pl-[6px] gap-[4px]`}>
                        <Host light={r.al} />
                        <span className={r.ac ?? ''}>{r.a}</span>
                      </div>
                      <div className={`${cellL} ${line} pl-[6px] gap-[5px]`}>
                        <Flag />
                        <span>{r.g}</span>
                      </div>
                      <div className={`${cellL} ${line} pl-[6px] gap-[4px]`}>
                        {r.bd ? <Host /> : <Host light globe={false} />}
                        <span className={r.bc ?? ''}>{r.b}</span>
                      </div>
                      <div className={`${cellL} ${line} pl-[6px] gap-[5px]`}>
                        {r.bd ? <Flag /> : <span className="-mx-[1px] flex"><Globe /></span>}
                        <span>{r.h}</span>
                      </div>
                      {r.v.map((x, k) => (
                        <div key={k} className={`${cellR} ${line}`}>
                          {k === 4 || k === 5 ? `2022/06/11 ${x}` : x}
                        </div>
                      ))}
                      <div />
                    </div>
                  );
                })}
              </div>
              <VScroll thumb="top-[-7px] h-[111px]" />
            </div>
            <div className="relative h-[12px] shrink-0 bg-[#f0f0f0]">
              <span className="absolute left-[16px] right-[560px] top-[7px] h-[3px] bg-[#808080]" />
            </div>
          </div>
        </div>
      </div>
    </div>
  );
}
